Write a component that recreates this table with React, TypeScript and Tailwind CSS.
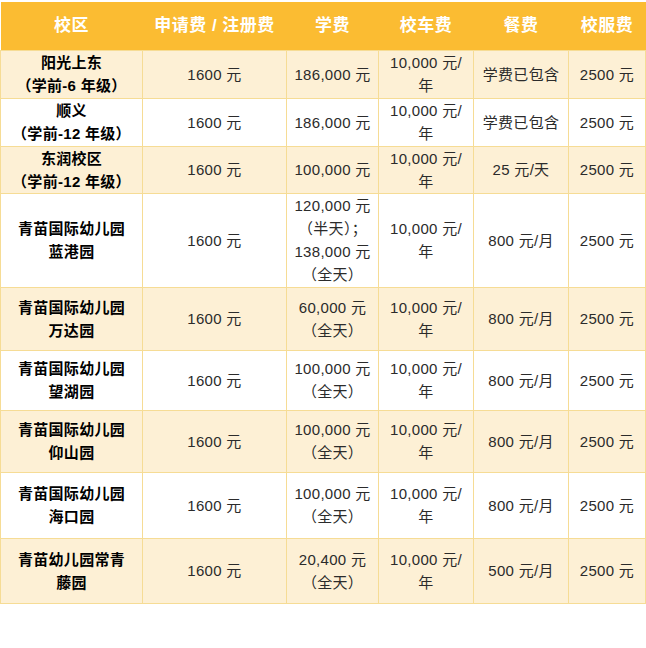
import React from "react";

interface IRow {
    campus: string[]
    fee: string
    tuition: string[]
    bus: string[]
    meal: string
    uniform: string
    h: string
}

const rows: IRow[] = [
    { campus: ["阳光上东", "（学前-6 年级）"], fee: "1600 元", tuition: ["186,000 元"], bus: ["10,000 元/", "年"], meal: "学费已包含", uniform: "2500 元", h: "h-[48px]" },
    { campus: ["顺义", "（学前-12 年级）"], fee: "1600 元", tuition: ["186,000 元"], bus: ["10,000 元/", "年"], meal: "学费已包含", uniform: "2500 元", h: "h-[48px]" },
    { campus: ["东润校区", "（学前-12 年级）"], fee: "1600 元", tuition: ["100,000 元"], bus: ["10,000 元/", "年"], meal: "25 元/天", uniform: "2500 元", h: "h-[47px]" },
    { campus: ["青苗国际幼儿园", "蓝港园"], fee: "1600 元", tuition: ["120,000 元", "（半天）；", "138,000 元", "（全天）"], bus: ["10,000 元/", "年"], meal: "800 元/月", uniform: "2500 元", h: "h-[94px]" },
    { campus: ["青苗国际幼儿园", "万达园"], fee: "1600 元", tuition: ["60,000 元", "（全天）"], bus: ["10,000 元/", "年"], meal: "800 元/月", uniform: "2500 元", h: "h-[63px]" },
    { campus: ["青苗国际幼儿园", "望湖园"], fee: "1600 元", tuition: ["100,000 元", "（全天）"], bus: ["10,000 元/", "年"], meal: "800 元/月", uniform: "2500 元", h: "h-[60px]" },
    { campus: ["青苗国际幼儿园", "仰山园"], fee: "1600 元", tuition: ["100,000 元", "（全天）"], bus: ["10,000 元/", "年"], meal: "800 元/月", uniform: "2500 元", h: "h-[62px]" },
    { campus: ["青苗国际幼儿园", "海口园"], fee: "1600 元", tuition: ["100,000 元", "（全天）"], bus: ["10,000 元/", "年"], meal: "800 元/月", uniform: "2500 元", h: "h-[66px]" },
    { campus: ["青苗幼儿园常青", "藤园"], fee: "1600 元", tuition: ["20,400 元", "（全天）"], bus: ["10,000 元/", "年"], meal: "500 元/月", uniform: "2500 元", h: "h-[65px]" },
]

function Lines({ items }: { items: string[] }) {
    return (
        <>
            {items.map((t, i) => (
                <div key={i}>{t}</div>
            ))}
        </>
    )
}

function App() {
    const td = "border border-[#f6dc95] text-center align-middle p-0"
    const th = "text-center align-middle font-bold text-white text-[17px] tracking-[0.5px] p-0"

    return (
        <div className="min-h-[648px] w-[646px] bg-white pt-[2px] font-['Liberation_Sans','Noto_Sans_CJK_SC',sans-serif]">
            <table className="w-[645px] table-fixed border-collapse text-[15px] leading-[23px] tracking-[0.3px] text-[#2b2b2b]">
                <colgroup>
                    <col className="w-[142px]" />
                    <col className="w-[144px]" />
                    <col className="w-[92px]" />
                    <col className="w-[95px]" />
                    <col className="w-[95px]" />
                    <col className="w-[77px]" />
                </colgroup>
                <thead>
                    <tr className="h-[48px] bg-[#fbbc32]">
                        <th className={th}>校区</th>
                        <th className={th}>申请费 / 注册费</th>
                        <th className={th}>学费</th>
                        <th className={th}>校车费</th>
                        <th className={th}>餐费</th>
                        <th className={th}>校服费</th>
                    </tr>
                </thead>
                <tbody>
                    {rows.map((r, i) => (
                        <tr key={i} className={`${r.h} ${i % 2 === 0 ? "bg-[#fdf0d5]" : "bg-white"}`}>
                            <td className={`${td} font-bold text-black`}><Lines items={r.campus} /></td>
                            <td className={td}>{r.fee}</td>
                            <td className={td}><Lines items={r.tuition} /></td>
                            <td className={td}><Lines items={r.bus} /></td>
                            <td className={td}>{r.meal}</td>
                            <td className={td}>{r.uniform}</td>
                        </tr>
                    ))}
                </tbody>
            </table>
        </div>
    );
}

export default App;
